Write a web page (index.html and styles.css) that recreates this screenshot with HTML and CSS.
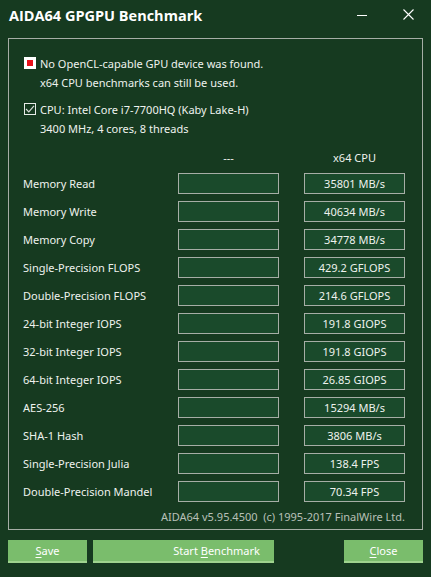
FILE: index.html
```html
<!DOCTYPE html>
<html>
<head>
<meta charset="utf-8">
<link rel="stylesheet" href="styles.css">
</head>
<body>
<div class="window">
  <div class="titlebar">
    <div class="title">AIDA64 GPGPU Benchmark</div>
    <div class="caption">
      <div class="cap-btn"><svg width="10" height="10" viewBox="0 0 10 10"><line x1="0" y1="5.5" x2="10" y2="5.5" stroke="#ffffff" stroke-width="1"/></svg></div>
      <div class="cap-btn"><svg width="11" height="11" viewBox="0 0 11 11"><path d="M0.5 0.5 L10.5 10.5 M10.5 0.5 L0.5 10.5" stroke="#ffffff" stroke-width="1.1" fill="none"/></svg></div>
    </div>
  </div>
  <div class="group">
    <div class="notice">
      <span class="box box-red"><span class="red"></span></span>
      <div class="notice-text">
        <div>No OpenCL-capable GPU device was found.</div>
        <div>x64 CPU benchmarks can still be used.</div>
      </div>
    </div>
    <div class="notice notice-cpu">
      <span class="box box-check"><svg width="10" height="10" viewBox="0 0 10 10"><path d="M1 5 L3.8 7.8 L9 1.8" stroke="#d8dcd8" stroke-width="1.2" fill="none"/></svg></span>
      <div class="notice-text">
        <div>CPU: Intel Core i7-7700HQ (Kaby Lake-H)</div>
        <div>3400 MHz, 4 cores, 8 threads</div>
      </div>
    </div>
    <div class="table">
      <div class="hdr"></div>
      <div class="hdr">---</div>
      <div class="hdr">x64 CPU</div>

      <div class="lbl">Memory Read</div><div class="val"></div><div class="val">35801 MB/s</div>
      <div class="lbl">Memory Write</div><div class="val"></div><div class="val">40634 MB/s</div>
      <div class="lbl">Memory Copy</div><div class="val"></div><div class="val">34778 MB/s</div>
      <div class="lbl">Single-Precision FLOPS</div><div class="val"></div><div class="val">429.2 GFLOPS</div>
      <div class="lbl">Double-Precision FLOPS</div><div class="val"></div><div class="val">214.6 GFLOPS</div>
      <div class="lbl">24-bit Integer IOPS</div><div class="val"></div><div class="val">191.8 GIOPS</div>
      <div class="lbl">32-bit Integer IOPS</div><div class="val"></div><div class="val">191.8 GIOPS</div>
      <div class="lbl">64-bit Integer IOPS</div><div class="val"></div><div class="val">26.85 GIOPS</div>
      <div class="lbl">AES-256</div><div class="val"></div><div class="val">15294 MB/s</div>
      <div class="lbl">SHA-1 Hash</div><div class="val"></div><div class="val">3806 MB/s</div>
      <div class="lbl">Single-Precision Julia</div><div class="val"></div><div class="val">138.4 FPS</div>
      <div class="lbl">Double-Precision Mandel</div><div class="val"></div><div class="val">70.34 FPS</div>
    </div>
    <div class="footer">AIDA64 v5.95.4500&nbsp;&nbsp;(c) 1995-2017 FinalWire Ltd.</div>
  </div>
  <div class="buttons">
    <div class="btn btn-save"><u>S</u>ave</div>
    <div class="btn btn-start">Start <u>B</u>enchmark</div>
    <div class="spacer"></div>
    <div class="btn btn-close"><u>C</u>lose</div>
  </div>
</div>
</body>
</html>
```

FILE: styles.css
```css
html, body {
  margin: 0;
  padding: 0;
  background: #163a20;
}
body {
  font-family: "Noto Sans", "Liberation Sans", sans-serif;
  font-size: 11px;
  color: #eef2ee;
}
.window {
  width: 431px;
  height: 577px;
  background: #163a20;
  overflow: hidden;
}
.titlebar {
  height: 38px;
  display: flex;
  align-items: flex-start;
}
.title {
  flex: 1;
  padding-left: 9px;
  padding-top: 5px;
  font-family: "Open Sans", sans-serif;
  font-weight: 700;
  font-size: 14.5px;
  line-height: 22px;
  color: #ffffff;
}
.caption {
  display: flex;
}
.cap-btn {
  width: 46px;
  height: 29px;
  display: flex;
  align-items: center;
  justify-content: center;
}
.cap-btn svg {
  display: block;
}
.group {
  margin: 0 8px 0 8px;
  border: 1px solid #a6aea6;
  padding: 15px 0 0 15px;
  box-sizing: border-box;
  height: 492px;
  display: flex;
  flex-direction: column;
}
.notice {
  display: flex;
  align-items: flex-start;
  line-height: 19px;
}
.notice-cpu {
  margin-top: 8px;
}
.box {
  width: 12px;
  height: 12px;
  box-sizing: border-box;
  margin-top: 3px;
  margin-right: 4px;
  flex: none;
  display: flex;
  align-items: center;
  justify-content: center;
}
.box-red {
  background: #ffffff;
  border: 1px solid #ffffff;
}
.red {
  width: 6px;
  height: 6px;
  background: #e8101a;
}
.box-check {
  border: 1px solid #e8ece8;
  background: #163a20;
}
.box-check svg {
  display: block;
}
.table {
  margin-top: 10px;
  margin-left: -1px;
  display: grid;
  grid-template-columns: 130px 101px 101px;
  grid-template-rows: 18px;
  grid-auto-rows: 21px;
  column-gap: 25px;
  row-gap: 7px;
}
.hdr {
  text-align: center;
  line-height: 19px;
  height: 18px;
}
.lbl {
  line-height: 21px;
  white-space: nowrap;
}
.val {
  border: 1px solid #a6aea6;
  background: #1a4a2b;
  box-sizing: border-box;
  text-align: center;
  line-height: 19px;
  white-space: nowrap;
}
.footer {
  margin-top: 5px;
  padding-right: 17px;
  text-align: right;
  line-height: 19px;
  color: #b8c0b8;
}
.buttons {
  display: flex;
  margin: 10px 8px 0 8px;
  height: 23px;
}
.btn {
  height: 23px;
  box-sizing: border-box;
  background: #7abd6c;
  border-bottom: 2px solid #9fd48e;
  color: #ffffff;
  text-align: center;
  line-height: 21px;
}
.btn u {
  text-underline-offset: 2px;
}
.btn-save {
  width: 79px;
}
.btn-start {
  width: 181px;
  margin-left: 6px;
  padding-left: 66px;
}
.spacer {
  flex: 1;
}
.btn-close {
  width: 79px;
}
```
